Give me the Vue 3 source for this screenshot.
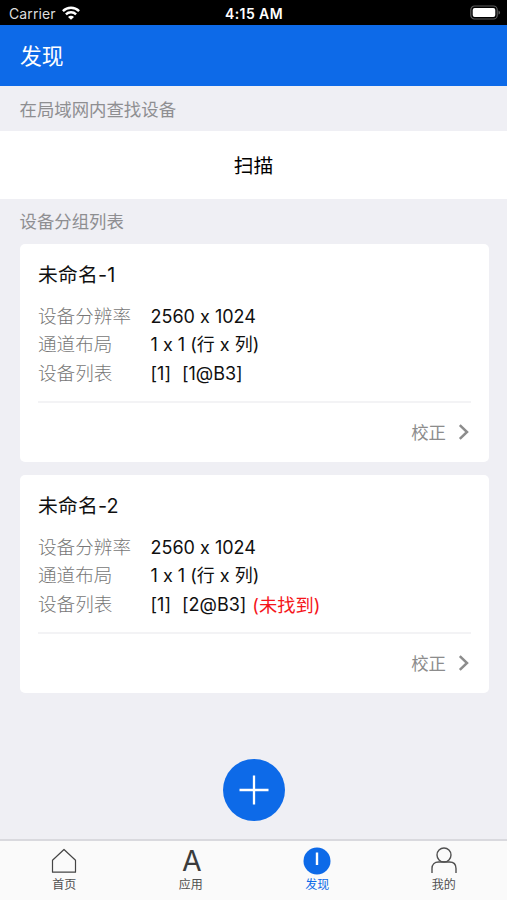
<script setup>
const groups = [
  { name: '未命名-1', device: '[1@B3]', missing: false },
  { name: '未命名-2', device: '[2@B3]', missing: true }
]
</script>

<template>
  <div class="screen">
    <div class="status">
      <div class="carrier">
        <span>Carrier</span>
        <svg class="wifi" width="18" height="14" viewBox="0 0 18 14">
          <g fill="none" stroke="#fff" stroke-width="2.4">
            <path d="M.9 5.1a11.6 11.6 0 0 1 16.2 0" />
            <path d="M3.9 8.4a7.3 7.3 0 0 1 10.2 0" />
          </g>
          <path d="M9 13.8 6 10.9a4.2 4.2 0 0 1 6 0z" fill="#fff" />
        </svg>
      </div>
      <span class="time">4:15 AM</span>
      <svg class="battery" width="32" height="16" viewBox="0 0 32 16">
        <rect x=".8" y="1" width="26.4" height="13" rx="3.8" fill="none" stroke="#5c5c5c" stroke-width="1.2" />
        <rect x="2.7" y="2.9" width="22.6" height="9.2" rx="2" fill="#fff" />
        <path d="M28.5 5.4c2.1.8 2.1 3.4 0 4.2z" fill="#5c5c5c" />
      </svg>
    </div>
    <header class="header">发现</header>
    <div class="section">在局域网内查找设备</div>
    <button class="scan">扫描</button>
    <div class="section list">设备分组列表</div>
    <main class="cards">
      <article v-for="g in groups" :key="g.name" class="card">
        <h2>{{ g.name }}</h2>
        <dl>
          <dt>设备分辨率</dt><dd>2560 x 1024</dd>
          <dt>通道布局</dt><dd>1 x 1 (行 x 列)</dd>
          <dt>设备列表</dt>
          <dd class="devices"><span>[1]</span><span>{{ g.device }}</span><span v-if="g.missing" class="missing">(未找到)</span></dd>
        </dl>
        <div class="action">
          <span>校正</span>
          <svg width="12" height="18" viewBox="0 0 12 18"><path d="M1.8 2.2 9 9l-7.2 6.8" fill="none" stroke="#8c8c8c" stroke-width="2.5" /></svg>
        </div>
      </article>
    </main>
    <div class="add-row">
      <button class="add" aria-label="添加">
        <svg width="62" height="62" viewBox="0 0 62 62"><path d="M31 16.5v29M16.5 31h29" stroke="#fff" stroke-width="2.3" /></svg>
      </button>
    </div>
    <nav class="tabs">
      <div class="tab">
        <div class="icon">
          <svg width="28" height="28" viewBox="0 0 28 28"><path d="M2.5 13.2 14 2.5l11.5 10.7v12h-23z" fill="none" stroke="#444" stroke-width="1.2" stroke-linejoin="round" /></svg>
        </div>
        <span>首页</span>
      </div>
      <div class="tab">
        <div class="icon letter">A</div>
        <span>应用</span>
      </div>
      <div class="tab active">
        <div class="icon">
          <svg width="28" height="28" viewBox="0 0 28 28"><circle cx="14" cy="14" r="13.5" fill="#0d6ae8" /><path d="M14 5.5V18" stroke="#fff" stroke-width="2.4" /></svg>
        </div>
        <span>发现</span>
      </div>
      <div class="tab">
        <div class="icon">
          <svg width="28" height="28" viewBox="0 0 28 28"><g fill="none" stroke="#505050" stroke-width="1.4"><circle cx="14" cy="8" r="7" /><path d="M2 26v-4.500c0-4.200 2.600-6.500 6.500-6.500h11c3.900 0 6.500 2.300 6.500 6.500V26" /></g></svg>
        </div>
        <span>我的</span>
      </div>
    </nav>
  </div>
</template>

<style>
body { margin: 0; }
</style>

<style scoped>
.screen {
  display: flex;
  flex-direction: column;
  width: 507px;
  height: 900px;
  overflow: hidden;
  background: #efeff4;
  color: #101010;
  font-family: Inter, "Noto Sans CJK SC", sans-serif;
  font-feature-settings: "calt" 0;
}
button {
  padding: 0;
  border: 0;
  font-family: inherit;
}
.status {
  display: grid;
  grid-template-columns: 1fr auto 1fr;
  align-items: center;
  flex: none;
  box-sizing: border-box;
  height: 25px;
  padding: 2px 5px 0 9px;
  background: #000;
  color: #fff;
  font-size: 14px;
  line-height: 22px;
}
.carrier {
  display: flex;
  align-items: center;
  gap: 6px;
  color: #ddd;
  letter-spacing: .1px;
}
.wifi { margin-top: -2px; }
.time {
  margin-right: 3px;
  font-size: 14px;
  font-weight: 600;
  letter-spacing: .4px;
}
.battery {
  justify-self: end;
  margin-top: -1px;
}
.header {
  display: flex;
  align-items: center;
  flex: none;
  box-sizing: border-box;
  height: 61px;
  padding: 0 0 2px 20px;
  background: #0d6ae8;
  color: #fff;
  font-size: 21.8px;
}
.section {
  display: flex;
  align-items: center;
  flex: none;
  box-sizing: border-box;
  height: 45px;
  padding: 0 0 1px 19.5px;
  color: #8e8e91;
  font-size: 17.4px;
}
.list { padding-bottom: 2px; }
.scan {
  flex: none;
  height: 68px;
  padding-bottom: 2px;
  background: #fff;
  color: #000;
  font-size: 19.8px;
  font-weight: 400;
}
.cards {
  display: flex;
  flex-direction: column;
  flex: none;
  gap: 13px;
  padding: 0 18px 0 20px;
}
.card {
  box-sizing: border-box;
  height: 218px;
  padding: 16px 18px 0;
  border-radius: 5px;
  background: #fff;
}
h2 {
  margin: 0 0 12px;
  font-size: 19.8px;
  font-weight: 400;
  letter-spacing: .2px;
  line-height: 30px;
}
dl {
  display: grid;
  grid-template-columns: 112.5px 1fr;
  grid-auto-rows: 28.3px;
  margin: 0;
  padding-bottom: 14.1px;
  border-bottom: 2px solid #f3f3f5;
  font-size: 18.6px;
  line-height: 28px;
  white-space: nowrap;
}
dt { color: #777; font-weight: 300; }
dd { margin: 0; padding-top: 1px; font-size: 18px; }
.devices { display: flex; }
.devices span + span { margin-left: 11px; }
.devices .missing { margin-left: 6px; color: #f5161b; font-size: 18.3px; }
.action {
  display: flex;
  align-items: center;
  justify-content: flex-end;
  gap: 12px;
  height: 59px;
  padding-right: 1px;
  color: #8c8c8c;
  font-size: 17.4px;
}
.action span { margin-top: -1px; }
.add-row {
  display: flex;
  justify-content: center;
  flex: 1;
  padding-top: 66px;
}
.add {
  width: 62px;
  height: 62px;
  border-radius: 50%;
  background: #0d6ae8;
}
.add svg { display: block; }
.tabs {
  display: grid;
  grid-template-columns: repeat(4, 1fr);
  flex: none;
  box-sizing: border-box;
  height: 61px;
  padding-left: 1px;
  border-top: 2px solid #d9d9de;
  background: #fafafa;
  color: #505050;
  font-size: 12px;
}
.tab {
  display: flex;
  flex-direction: column;
  align-items: center;
  padding-top: 6px;
}
.icon {
  display: flex;
  align-items: center;
  justify-content: center;
  height: 28px;
}
.tab > span {
  margin-top: 1px;
  line-height: 18px;
}
.letter {
  padding-left: 2px;
  color: #3c3c3c;
  font-size: 28.5px;
  line-height: 28px;
}
.active { color: #0d6ae8; }
</style>
